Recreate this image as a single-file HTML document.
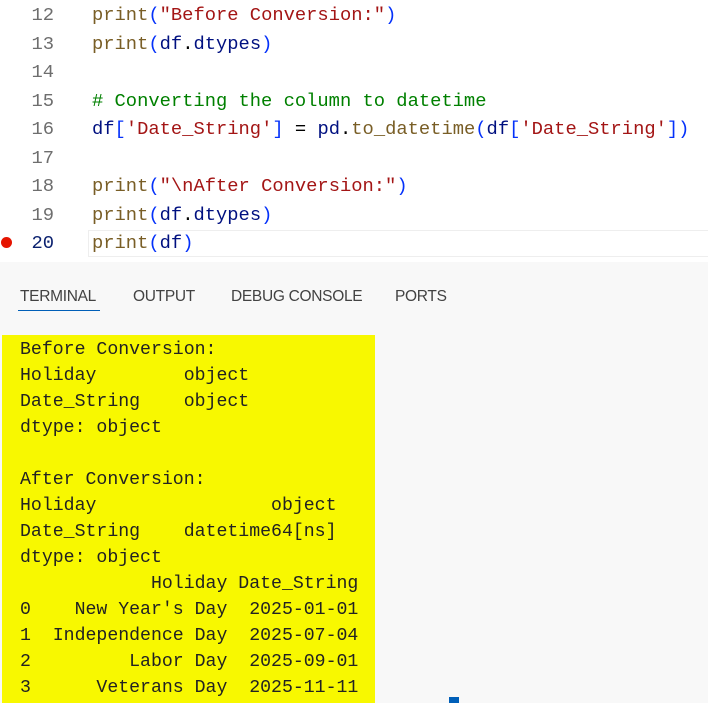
<!DOCTYPE html>
<html><head><meta charset="utf-8"><style>
body{margin:0;width:708px;height:703px;overflow:hidden;background:#f8f8f8;position:relative;font-family:"Liberation Mono",monospace}
#ed{position:absolute;left:0;top:0;width:708px;height:262px;background:#fff}
.l{position:absolute;height:28px;line-height:28px;font-size:18.8px;white-space:pre;color:#795e26}
.n{position:absolute;left:28px;width:26px;text-align:right;height:28px;line-height:28px;font-size:18.8px;color:#6e6e6e}
.p{color:#795e26}.b{color:#0431fa}.v{color:#001080}.s{color:#a31515}.c{color:#008000}.o{color:#000}.t{color:#267f99}
#hl{position:absolute;left:88px;top:230px;width:630px;height:25px;border:1px solid #eee;border-right:none}
#dot{position:absolute;left:1px;top:237px;width:11px;height:11px;border-radius:50%;background:#e51400}
.tab{position:absolute;top:288px;font-family:"Liberation Sans",sans-serif;font-size:15.5px;color:#424242;letter-spacing:-0.3px}
#ul{position:absolute;left:18px;top:310px;width:82px;height:1px;background:#005fb8}
#y{position:absolute;left:2px;top:335px;width:373px;height:368px;background:#f8f800}
.tl{position:absolute;left:20px;font-size:18.2px;line-height:26px;height:26px;white-space:pre;color:#222}
</style></head><body>
<div id="ed">
<div class="n" style="top:1px">12</div><div class="l" style="left:92px;top:1px">print<span class="b">(</span><span class="s">"Before Conversion:"</span><span class="b">)</span></div>
<div class="n" style="top:30px">13</div><div class="l" style="left:92px;top:30px">print<span class="b">(</span><span class="v">df</span><span class="o">.</span><span class="v">dtypes</span><span class="b">)</span></div>
<div class="n" style="top:58px">14</div>
<div class="n" style="top:87px">15</div><div class="l c" style="left:92px;top:87px"># Converting the column to datetime</div>
<div class="n" style="top:115px">16</div><div class="l" style="left:92px;top:115px"><span class="v">df</span><span class="b">[</span><span class="s">'Date_String'</span><span class="b">]</span><span class="o"> = </span><span class="v">pd</span><span class="o">.</span>to_datetime<span class="b">(</span><span class="v">df</span><span class="b">[</span><span class="s">'Date_String'</span><span class="b">])</span></div>
<div class="n" style="top:144px">17</div>
<div class="n" style="top:172px">18</div><div class="l" style="left:92px;top:172px">print<span class="b">(</span><span class="s">"\nAfter Conversion:"</span><span class="b">)</span></div>
<div class="n" style="top:201px">19</div><div class="l" style="left:92px;top:201px">print<span class="b">(</span><span class="v">df</span><span class="o">.</span><span class="v">dtypes</span><span class="b">)</span></div>
<div id="hl"></div>
<div id="dot"></div>
<div class="n" style="top:229px;color:#0b216f">20</div><div class="l" style="left:92px;top:229px">print<span class="b">(</span><span class="v">df</span><span class="b">)</span></div>
</div>
<div class="tab" style="left:20px">TERMINAL</div>
<div class="tab" style="left:133px">OUTPUT</div>
<div class="tab" style="left:231px">DEBUG CONSOLE</div>
<div class="tab" style="left:395px">PORTS</div>
<div id="ul"></div>
<div id="y"></div>
<div class="tl" style="top:337px">Before Conversion:</div>
<div class="tl" style="top:363px">Holiday        object</div>
<div class="tl" style="top:389px">Date_String    object</div>
<div class="tl" style="top:415px">dtype: object</div>
<div class="tl" style="top:467px">After Conversion:</div>
<div class="tl" style="top:493px">Holiday                object</div>
<div class="tl" style="top:519px">Date_String    datetime64[ns]</div>
<div class="tl" style="top:545px">dtype: object</div>
<div class="tl" style="top:571px">            Holiday Date_String</div>
<div class="tl" style="top:597px">0    New Year's Day  2025-01-01</div>
<div class="tl" style="top:623px">1  Independence Day  2025-07-04</div>
<div class="tl" style="top:649px">2         Labor Day  2025-09-01</div>
<div class="tl" style="top:675px">3      Veterans Day  2025-11-11</div>
<div style="position:absolute;left:449px;top:697px;width:10px;height:6px;background:#005fb8"></div>
</body></html>
